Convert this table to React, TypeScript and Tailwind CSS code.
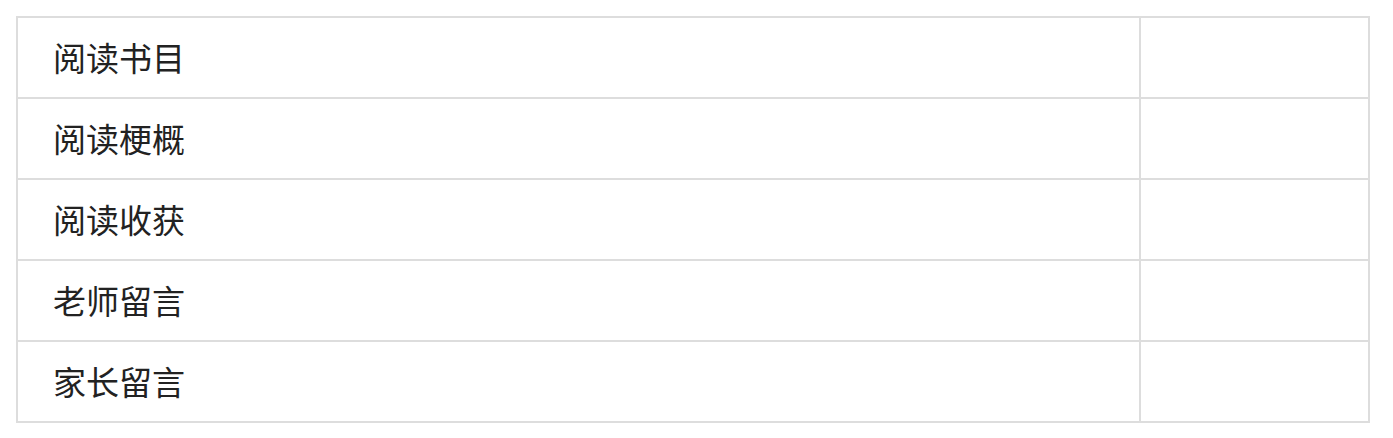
import React from 'react';

const rows = ['阅读书目', '阅读梗概', '阅读收获', '老师留言', '家长留言'];

export default function App() {
  return (
    <div className="pt-4 pl-4 pr-[23px] pb-4 bg-white">
      <table
        className="w-full border-collapse border-2 border-[#dddddd] text-[#222222]"
        style={{ fontFamily: '"Noto Sans CJK SC", "Noto Sans", sans-serif' }}
      >
        <tbody>
          {rows.map((label) => (
            <tr key={label} className="h-[81px]">
              <td className="border-2 border-[#dddddd] pl-[35px] text-[33px] leading-none">{label}</td>
              <td className="border-2 border-[#dddddd] w-[229px]"></td>
            </tr>
          ))}
        </tbody>
      </table>
    </div>
  );
}
